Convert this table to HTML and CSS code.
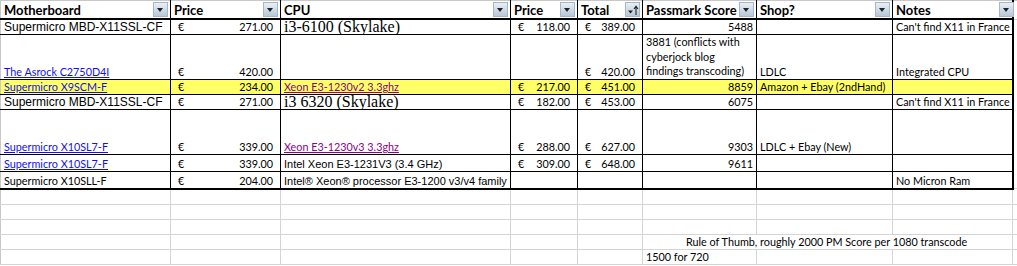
FILE: index.html
```html
<!DOCTYPE html>
<html>
<head>
<meta charset="utf-8">
<link rel="stylesheet" href="styles.css">
</head>
<body>
<table class="sheet">
  <colgroup>
    <col class="w-mb"><col class="w-pr"><col class="w-cpu"><col class="w-pr2"><col class="w-tot"><col class="w-pm"><col class="w-shop"><col class="w-notes"><col class="w-pad">
  </colgroup>
  <thead>
    <tr class="hdr">
      <th class="first"><div class="hc"><span>Motherboard</span><span class="flt"></span></div></th>
      <th><div class="hc"><span>Price</span><span class="flt"></span></div></th>
      <th><div class="hc"><span>CPU</span><span class="flt"></span></div></th>
      <th><div class="hc"><span>Price</span><span class="flt"></span></div></th>
      <th><div class="hc"><span>Total</span><span class="flt sort"><svg width="14" height="14" viewBox="0 0 14 14"><path d="M2 7.5h5l-2.5 3z" fill="#222"/><path d="M10 12V3.5M8 6l2-2.8 2 2.8" stroke="#222" stroke-width="1.1" fill="none"/></svg></span></div></th>
      <th><div class="hc"><span>Passmark Score</span><span class="flt"></span></div></th>
      <th><div class="hc"><span>Shop?</span><span class="flt"></span></div></th>
      <th class="last"><div class="hc"><span>Notes</span><span class="flt shift"></span></div></th>
      <th class="pad"></th>
    </tr>
  </thead>
  <tbody>
    <tr class="data h14">
      <td class="first arb">Supermicro MBD-X11SSL-CF</td>
      <td><div class="acc"><span>€</span><span>271.00</span></div></td>
      <td class="ser">i3-6100 (Skylake)</td>
      <td><div class="acc"><span>€</span><span>118.00</span></div></td>
      <td><div class="acc"><span>€</span><span>389.00</span></div></td>
      <td class="num">5488</td>
      <td></td>
      <td class="last">Can't find X11 in France</td>
      <td class="pad"></td>
    </tr>
    <tr class="data h43">
      <td class="first"><a class="lnk">The Asrock C2750D4I</a></td>
      <td><div class="acc"><span>€</span><span>420.00</span></div></td>
      <td></td>
      <td></td>
      <td><div class="acc"><span>€</span><span>420.00</span></div></td>
      <td class="wrap">3881 (conflicts with cyberjock blog findings transcoding)</td>
      <td>LDLC</td>
      <td class="last">Integrated CPU</td>
      <td class="pad"></td>
    </tr>
    <tr class="data h13 hl">
      <td class="first"><a class="lnk">Supermicro X9SCM-F</a></td>
      <td><div class="acc"><span>€</span><span>234.00</span></div></td>
      <td><a class="vis">Xeon E3-1230v2 3.3ghz</a></td>
      <td><div class="acc"><span>€</span><span>217.00</span></div></td>
      <td><div class="acc"><span>€</span><span>451.00</span></div></td>
      <td class="num">8859</td>
      <td>Amazon + Ebay (2ndHand)</td>
      <td class="last"></td>
      <td class="pad"></td>
    </tr>
    <tr class="data h13">
      <td class="first arb">Supermicro MBD-X11SSL-CF</td>
      <td><div class="acc"><span>€</span><span>271.00</span></div></td>
      <td class="ser">i3 6320 (Skylake)</td>
      <td><div class="acc"><span>€</span><span>182.00</span></div></td>
      <td><div class="acc"><span>€</span><span>453.00</span></div></td>
      <td class="num">6075</td>
      <td></td>
      <td class="last">Can't find X11 in France</td>
      <td class="pad"></td>
    </tr>
    <tr class="data h44">
      <td class="first"><a class="lnk">Supermicro X10SL7-F</a></td>
      <td><div class="acc"><span>€</span><span>339.00</span></div></td>
      <td><a class="vis">Xeon E3-1230v3 3.3ghz</a></td>
      <td><div class="acc"><span>€</span><span>288.00</span></div></td>
      <td><div class="acc"><span>€</span><span>627.00</span></div></td>
      <td class="num">9303</td>
      <td>LDLC + Ebay (New)</td>
      <td class="last"></td>
      <td class="pad"></td>
    </tr>
    <tr class="data h16">
      <td class="first"><a class="lnk">Supermicro X10SL7-F</a></td>
      <td><div class="acc"><span>€</span><span>339.00</span></div></td>
      <td class="ar">Intel Xeon E3-1231V3 (3.4 GHz)</td>
      <td><div class="acc"><span>€</span><span>309.00</span></div></td>
      <td><div class="acc"><span>€</span><span>648.00</span></div></td>
      <td class="num">9611</td>
      <td></td>
      <td class="last"></td>
      <td class="pad"></td>
    </tr>
    <tr class="data h16 endrow">
      <td class="first">Supermicro X10SLL-F</td>
      <td><div class="acc"><span>€</span><span>204.00</span></div></td>
      <td class="ar">Intel® Xeon® processor E3-1200 v3/v4 family</td>
      <td></td>
      <td></td>
      <td></td>
      <td></td>
      <td class="last">No Micron Ram</td>
      <td class="pad"></td>
    </tr>
    <tr class="empty h14">
      <td class="first"></td><td></td><td></td><td></td><td></td><td></td><td></td><td></td><td class="pad"></td>
    </tr>
    <tr class="empty h14">
      <td class="first"></td><td></td><td></td><td></td><td></td><td></td><td></td><td></td><td class="pad"></td>
    </tr>
    <tr class="empty h14">
      <td class="first"></td><td></td><td></td><td></td><td></td><td></td><td></td><td></td><td class="pad"></td>
    </tr>
    <tr class="empty h14">
      <td class="first"></td><td></td><td></td><td></td><td></td><td colspan="3" class="note-span">Rule of Thumb, roughly 2000 PM Score per 1080 transcode</td><td class="pad"></td>
    </tr>
    <tr class="empty h14">
      <td class="first"></td><td></td><td></td><td></td><td></td><td>1500 for 720</td><td></td><td></td><td class="pad"></td>
    </tr>
  </tbody>
</table>
</body>
</html>
```

FILE: styles.css
```css
html, body {
  margin: 0;
  padding: 0;
  background: #fff;
  overflow: hidden;
}

.sheet {
  border-collapse: collapse;
  table-layout: fixed;
  width: 1017px;
  font-family: Lato, "Liberation Sans", sans-serif;
  font-size: 10.8px;
  color: #000;
}

.w-mb { width: 170px; }
.w-pr { width: 110px; }
.w-cpu { width: 230px; }
.w-pr2 { width: 67px; }
.w-tot { width: 65px; }
.w-pm { width: 114px; }
.w-shop { width: 136px; }
.w-notes { width: 120px; }
.w-pad { width: 5px; }

.sheet th,
.sheet td {
  padding: 0 3px;
  vertical-align: bottom;
  white-space: nowrap;
  overflow: hidden;
  line-height: 14px;
  text-align: left;
}

/* header */
.hdr th {
  height: 17px;
  padding: 0 2px 0 3px;
  vertical-align: middle;
  font-weight: 700;
  font-size: 13px;
  border-top: 1px solid #c8c8c8;
  border-right: 1px solid #000;
  border-bottom: 2px solid #000;
}
.hdr th.first { border-left: 1px solid #c8c8c8; }
.hdr th.last { border-right: 2px solid #000; overflow: visible; }
.hdr th.pad { border-right: 1px solid #d4d4d4; border-bottom: 1px solid #d4d4d4; }

.hc {
  display: flex;
  align-items: center;
  justify-content: space-between;
}

.flt {
  position: relative;
  flex: none;
  width: 13px;
  height: 13px;
  border: 1px solid #a7b6c6;
  background: linear-gradient(#e9eff5, #b7c8d9);
}
.flt.shift { margin-right: -4px; }
.flt::after {
  content: "";
  position: absolute;
  left: 3px;
  top: 5px;
  border-left: 3.5px solid transparent;
  border-right: 3.5px solid transparent;
  border-top: 4px solid #222;
}
.flt.sort::after { display: none; }
.flt svg { display: block; }

/* data rows */
.data td {
  border-right: 1px solid #000;
  border-bottom: 1px solid #000;
}
.data td.first { border-left: 1px solid #c8c8c8; }
.data td.last { border-right: 2px solid #000; }
.data td.pad { border-right: 1px solid #d4d4d4; border-bottom: 1px solid #fff; }
.endrow td { border-bottom: 2px solid #000; }
.endrow td.pad { border-bottom: 1px solid #d4d4d4; }

.hl td { background: #ffff66; }
.hl td.pad { background: #fff; }

.h13 td { height: 13px; }
.h14 td { height: 14px; }
.h16 td { height: 16px; }
.h43 td { height: 43px; }
.h44 td { height: 44px; }

/* empty grid rows */
.empty td {
  border-right: 1px solid #d4d4d4;
  border-bottom: 1px solid #d4d4d4;
}
.empty td.first { border-left: 1px solid #c8c8c8; }

.note-span { padding-left: 43px !important; }

/* content styles */
.arb {
  font-family: "Liberation Sans", Arial, sans-serif;
  font-size: 12px;
  line-height: 14px;
}
.ar {
  font-family: "Liberation Sans", Arial, sans-serif;
  font-size: 11px;
}
.ser {
  font-family: "Liberation Serif", "Times New Roman", serif;
  font-size: 16px;
  line-height: 14px;
}
.num { text-align: right !important; }
.wrap {
  white-space: normal !important;
  line-height: 14.5px !important;
}

.acc {
  display: flex;
  justify-content: space-between;
  padding: 0 4px 0 4px;
}

.lnk {
  color: #1010ee;
  text-decoration: underline;
}
.vis {
  color: #8a008a;
  text-decoration: underline;
}
```
